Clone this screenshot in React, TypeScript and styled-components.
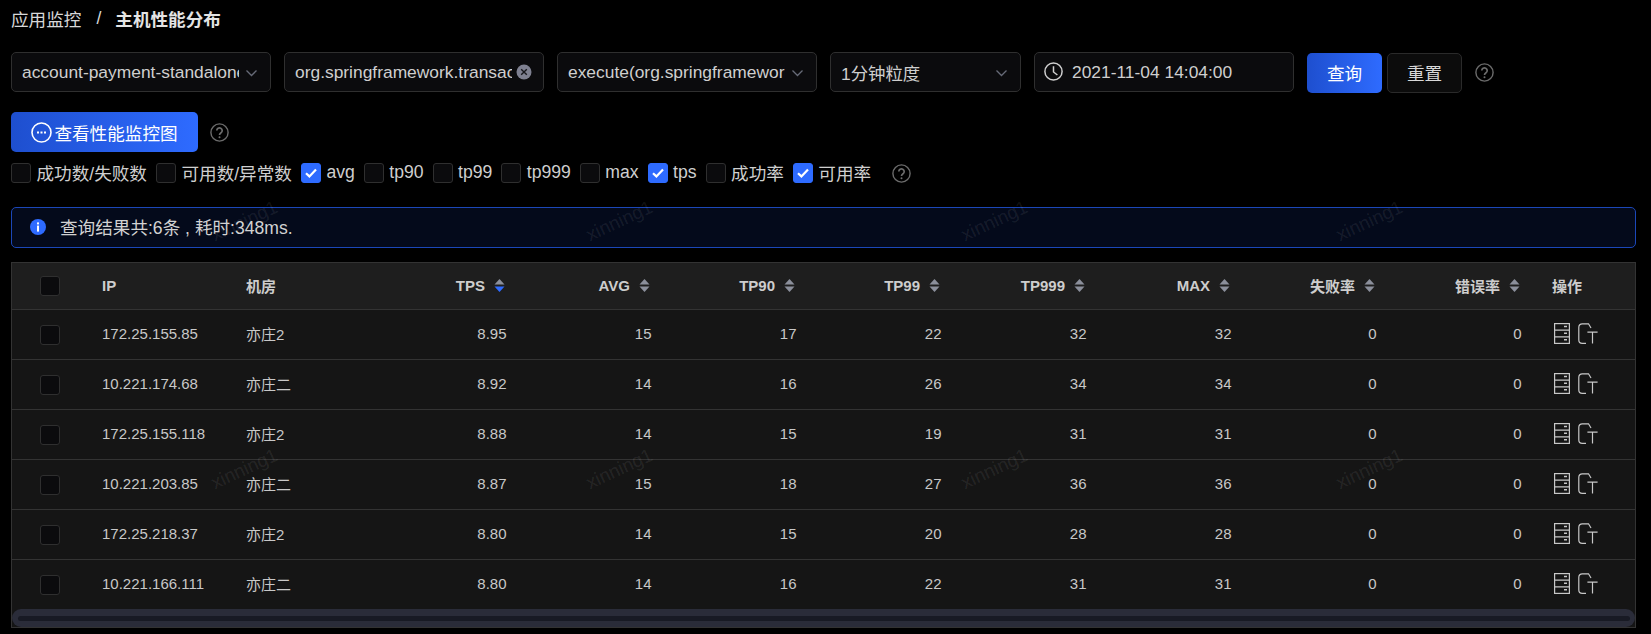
import React from 'react';
import styled, { createGlobalStyle } from 'styled-components';

const GlobalStyle = createGlobalStyle`
  html, body {
    margin: 0;
    height: 100%;
    background: #000;
  }
  body {
    font-family: "Liberation Sans", "Noto Sans CJK SC", sans-serif;
    overflow: hidden;
  }
`;

const Page = styled.div`
  position: relative;
  box-sizing: border-box;
  width: 1651px;
  height: 634px;
  padding-left: 11px;
  padding-right: 15px;
  overflow: hidden;
  font-size: 17.6px;
  color: #d2d2d2;
`;

const Breadcrumb = styled.div`
  display: flex;
  align-items: center;
  height: 36px;
  color: #d8d8d8;
`;
const Slash = styled.span`
  margin: 0 14px 0 15px;
`;
const Current = styled.span`
  font-weight: 700;
  color: #e4e4e4;
`;

const FilterRow = styled.div`
  display: flex;
  align-items: center;
  margin-top: 16px;
  height: 40px;
`;

const Field = styled.div<{ $w: number }>`
  box-sizing: border-box;
  display: flex;
  align-items: center;
  width: ${(p) => p.$w}px;
  height: 40px;
  margin-right: 13px;
  padding: 0 10px;
  background: #0b0b0d;
  border: 1px solid #2f2f2f;
  border-radius: 5px;
`;
const FieldText = styled.div`
  flex: 1;
  min-width: 0;
  overflow: hidden;
  white-space: nowrap;
  font-size: 17.4px;
  color: #cfcfcf;
`;
const Chevron = styled.svg`
  flex: none;
  margin: 0 2px 0 6px;
  width: 13px;
  height: 13px;
  color: #676b78;
`;
const ClearMark = styled.svg`
  flex: none;
  margin: 0 1px 0 4px;
  width: 16px;
  height: 16px;
`;
const ClockMark = styled.svg`
  flex: none;
  margin: -2px 9px 0 -1px;
  width: 19px;
  height: 19px;
  color: #cfcfcf;
`;

const PrimaryButton = styled.button`
  display: flex;
  align-items: center;
  justify-content: center;
  height: 40px;
  padding: 0;
  font: inherit;
  color: #fff;
  border: 0;
  border-radius: 5px;
  background: linear-gradient(90deg, #1e4fcf, #2e6bff);
`;
const QueryButton = styled(PrimaryButton)`
  width: 75px;
  margin-top: 2px;
  padding-bottom: 2px;
`;
const ResetButton = styled.button`
  width: 75px;
  height: 40px;
  margin: 2px 0 0 5px;
  padding: 0 0 2px;
  font: inherit;
  color: #d8d8d8;
  background: #0c0c0c;
  border: 1px solid #2a2a2a;
  border-radius: 5px;
`;
const ChartButton = styled(PrimaryButton)`
  width: 187px;
`;
const ChartMark = styled.svg`
  width: 21px;
  height: 21px;
  margin-right: 2px;
`;

const HelpMark = styled.svg<{ $left: number }>`
  flex: none;
  width: 19px;
  height: 19px;
  margin-left: ${(p) => p.$left}px;
  color: #6c6c6c;
`;

const ActionRow = styled.div`
  display: flex;
  align-items: center;
  margin-top: 20px;
  height: 40px;
`;

const CheckRow = styled.div`
  display: flex;
  align-items: center;
  gap: 9px;
  margin-top: 11px;
  height: 20px;
`;
const CheckItem = styled.label`
  display: flex;
  align-items: center;
  gap: 5.5px;
  color: #cfcfcf;
`;
const CheckLabel = styled.span`
  margin-top: -2px;
`;
const Box = styled.span<{ $on?: boolean }>`
  box-sizing: border-box;
  flex: none;
  display: flex;
  align-items: center;
  justify-content: center;
  width: 20px;
  height: 20px;
  border-radius: 3px;
  background: ${(p) => (p.$on ? '#2e6bff' : '#0b0b0d')};
  border: 1px solid ${(p) => (p.$on ? '#2e6bff' : '#2f2f2f')};
`;

const Alert = styled.div`
  box-sizing: border-box;
  display: flex;
  align-items: center;
  height: 41px;
  margin-top: 24px;
  padding: 0 0 2px 18px;
  background: #040a1b;
  border: 1px solid #1b47b8;
  border-radius: 5px;
  color: #d2d2d2;
`;
const InfoMark = styled.svg`
  width: 16px;
  height: 16px;
  margin-right: 14px;
`;

const TableWrap = styled.div`
  box-sizing: border-box;
  margin-top: 14px;
  height: 366px;
  border: 1px solid #333;
  background: #151515;
`;
const Table = styled.table`
  width: 100%;
  table-layout: fixed;
  border-collapse: collapse;
  font-size: 15px;
`;
const Col = styled.col<{ $w?: number }>`
  width: ${(p) => (p.$w ? `${p.$w}px` : 'auto')};
`;
const Th = styled.th<{ $right?: boolean }>`
  box-sizing: border-box;
  height: 46px;
  padding: 0 ${(p) => (p.$right ? '17px' : '15px')} 1px 15px;
  text-align: ${(p) => (p.$right ? 'right' : 'left')};
  font-size: 15px;
  font-weight: 700;
  color: #cdcdcd;
  background: #1e1e1e;
  border-bottom: 1px solid #333;
`;
const Td = styled.td<{ $right?: boolean }>`
  box-sizing: border-box;
  height: 50px;
  padding: 0 ${(p) => (p.$right ? '15.5px' : '15px')} 2px 15px;
  text-align: ${(p) => (p.$right ? 'right' : 'left')};
  color: #c8c8c8;
  border-bottom: 1px solid #333;
  tr:last-child > & {
    border-bottom: 0;
  }
`;
const CheckCell = styled.div<{ $top: number }>`
  display: flex;
  justify-content: center;
  margin: ${(p) => p.$top}px -15px 0;
`;
const HeadLabel = styled.span`
  display: inline-flex;
  align-items: center;
  gap: 9px;
`;
const SortMark = styled.svg`
  width: 11px;
  height: 15px;
`;
const ActionIcons = styled.div`
  display: flex;
  align-items: center;
  gap: 8px;
  margin-left: 2px;
  color: #c8c8c8;
`;
const ActionMark = styled.svg<{ $w: number }>`
  width: ${(p) => p.$w}px;
  height: 21px;
`;

const ScrollTrack = styled.div`
  box-sizing: border-box;
  height: 18px;
  padding: 7px 5px 6px 6px;
  background: #2a2c39;
  border-radius: 9px;
`;
const ScrollThumb = styled.div`
  height: 5px;
  background: #181a24;
  border-radius: 3px;
`;

const WatermarkLayer = styled.div`
  position: absolute;
  inset: 0;
  display: grid;
  grid-template-columns: repeat(4, 375px);
  grid-auto-rows: 248px;
  padding: 97px 0 0 57px;
  pointer-events: none;
  overflow: hidden;
`;
const Watermark = styled.div`
  display: flex;
  align-items: center;
  justify-content: center;
  font-size: 19px;
  color: rgba(255, 255, 255, 0.085);
  transform: rotate(-25deg);
`;

const ChevronIcon = () => (
  <Chevron viewBox="0 0 13 13" fill="none" stroke="currentColor" strokeWidth="1.3">
    <path d="M1.5 4.5 6.5 9.5 11.5 4.5" />
  </Chevron>
);

const HelpIcon = ({ left }: { left: number }) => (
  <HelpMark $left={left} viewBox="0 0 19 19" fill="none" stroke="currentColor" strokeWidth="1.4">
    <circle cx="9.5" cy="9.5" r="8.6" />
    <path d="M6.8 7.6a2.7 2.7 0 1 1 4.2 2.2c-1 .7-1.5 1.2-1.5 2.2" strokeWidth="1.7" />
    <circle cx="9.5" cy="14.2" r="1" fill="currentColor" stroke="none" />
  </HelpMark>
);

const Tick = () => (
  <svg width="14" height="12" viewBox="0 0 14 12" fill="none" stroke="#fff" strokeWidth="2.2">
    <path d="M2 6.2 5.4 9.4 12 2.4" />
  </svg>
);

const SortIcon = ({ active }: { active?: boolean }) => (
  <SortMark viewBox="0 0 11 15">
    <path d="M5.5 1 10.5 6.5H.5Z" fill="#8b8f9b" />
    <path d="M.5 8.5H10.5L5.5 14Z" fill={active ? '#2e6bff' : '#8b8f9b'} />
  </SortMark>
);

const DrawerIcon = () => (
  <ActionMark $w={16} viewBox="0 0 16 21" fill="none" stroke="currentColor" strokeWidth="1.2">
    <rect x=".6" y=".6" width="14.8" height="19.8" />
    <path d="M.6 7.2H15.4M.6 13.8H15.4" />
    <path d="M10 3.6H13M10 10.2H13M10 16.8H13" strokeWidth="1.5" />
  </ActionMark>
);

const TraceIcon = () => (
  <ActionMark $w={20} viewBox="0 0 20 21" fill="none" stroke="currentColor" strokeWidth="1.2">
    <path d="M13 5 10.5.8H4.2C2.2.8.8 2.2.8 4.2V17c0 2 1.4 3.4 3.4 3.4H8" />
    <path d="M9.4 9.2H19.6M14.5 9.2V20.4" />
  </ActionMark>
);

const rows = [
  ['172.25.155.85', '亦庄2', '8.95', '15', '17', '22', '32', '32'],
  ['10.221.174.68', '亦庄二', '8.92', '14', '16', '26', '34', '34'],
  ['172.25.155.118', '亦庄2', '8.88', '14', '15', '19', '31', '31'],
  ['10.221.203.85', '亦庄二', '8.87', '15', '18', '27', '36', '36'],
  ['172.25.218.37', '亦庄2', '8.80', '14', '15', '20', '28', '28'],
  ['10.221.166.111', '亦庄二', '8.80', '14', '16', '22', '31', '31'],
];

const metrics = ['TPS', 'AVG', 'TP90', 'TP99', 'TP999', 'MAX', '失败率', '错误率'];

const checks: [string, boolean][] = [
  ['成功数/失败数', false],
  ['可用数/异常数', false],
  ['avg', true],
  ['tp90', false],
  ['tp99', false],
  ['tp999', false],
  ['max', false],
  ['tps', true],
  ['成功率', false],
  ['可用率', true],
];

export default function App() {
  return (
    <Page>
      <GlobalStyle />
      <Breadcrumb>
        应用监控
        <Slash>/</Slash>
        <Current>主机性能分布</Current>
      </Breadcrumb>

      <FilterRow>
        <Field $w={260}>
          <FieldText>account-payment-standalone</FieldText>
          <ChevronIcon />
        </Field>
        <Field $w={260}>
          <FieldText>org.springframework.transaction</FieldText>
          <ClearMark viewBox="0 0 16 16">
            <circle cx="8" cy="8" r="7.5" fill="#7e8090" />
            <path d="M5.2 5.2 10.8 10.8M10.8 5.2 5.2 10.8" stroke="#17171c" strokeWidth="1.4" />
          </ClearMark>
        </Field>
        <Field $w={260}>
          <FieldText>execute(org.springframework</FieldText>
          <ChevronIcon />
        </Field>
        <Field $w={191}>
          <FieldText>1分钟粒度</FieldText>
          <ChevronIcon />
        </Field>
        <Field $w={260}>
          <ClockMark viewBox="0 0 19 19" fill="none" stroke="currentColor" strokeWidth="1.5">
            <circle cx="9.5" cy="9.5" r="8.6" />
            <path d="M9.5 4.2V10L13.4 13" />
          </ClockMark>
          <FieldText>2021-11-04 14:04:00</FieldText>
        </Field>
        <QueryButton>查询</QueryButton>
        <ResetButton>重置</ResetButton>
        <HelpIcon left={13} />
      </FilterRow>

      <ActionRow>
        <ChartButton>
          <ChartMark viewBox="0 0 21 21" fill="none">
            <circle cx="10.5" cy="10.5" r="9.5" stroke="#fff" strokeWidth="1.6" />
            <path d="M6 10.5H15" stroke="#fff" strokeWidth="2.2" strokeDasharray="2 1.5" />
          </ChartMark>
          查看性能监控图
        </ChartButton>
        <HelpIcon left={12} />
      </ActionRow>

      <CheckRow>
        {checks.map(([label, on]) => (
          <CheckItem key={label}>
            <Box $on={on}>{on && <Tick />}</Box>
            <CheckLabel>{label}</CheckLabel>
          </CheckItem>
        ))}
        <HelpIcon left={12} />
      </CheckRow>

      <Alert>
        <InfoMark viewBox="0 0 16 16">
          <circle cx="8" cy="8" r="8" fill="#2e6bff" />
          <rect x="7" y="3.4" width="2" height="2" fill="#fff" />
          <rect x="7" y="6.6" width="2" height="6" fill="#fff" />
        </InfoMark>
        查询结果共:6条 , 耗时:348ms.
      </Alert>

      <TableWrap>
        <Table>
          <colgroup>
            <Col $w={75} />
            <Col $w={144} />
            <Col $w={146} />
            {metrics.map((m) => (
              <Col key={m} $w={145} />
            ))}
            <Col />
          </colgroup>
          <thead>
            <tr>
              <Th>
                <CheckCell $top={1}>
                  <Box />
                </CheckCell>
              </Th>
              <Th>IP</Th>
              <Th>机房</Th>
              {metrics.map((m) => (
                <Th key={m} $right>
                  <HeadLabel>
                    {m}
                    <SortIcon active={m === 'TPS'} />
                  </HeadLabel>
                </Th>
              ))}
              <Th>操作</Th>
            </tr>
          </thead>
          <tbody>
            {rows.map(([ip, room, ...values]) => (
              <tr key={ip}>
                <Td>
                  <CheckCell $top={4}>
                    <Box />
                  </CheckCell>
                </Td>
                <Td>{ip}</Td>
                <Td>{room}</Td>
                {values.map((v, i) => (
                  <Td key={i} $right>
                    {v}
                  </Td>
                ))}
                <Td $right>0</Td>
                <Td $right>0</Td>
                <Td>
                  <ActionIcons>
                    <DrawerIcon />
                    <TraceIcon />
                  </ActionIcons>
                </Td>
              </tr>
            ))}
          </tbody>
        </Table>
        <ScrollTrack>
          <ScrollThumb />
        </ScrollTrack>
      </TableWrap>

      <WatermarkLayer>
        {Array.from({ length: 8 }, (_, i) => (
          <Watermark key={i}>xinning1</Watermark>
        ))}
      </WatermarkLayer>
    </Page>
  );
}
